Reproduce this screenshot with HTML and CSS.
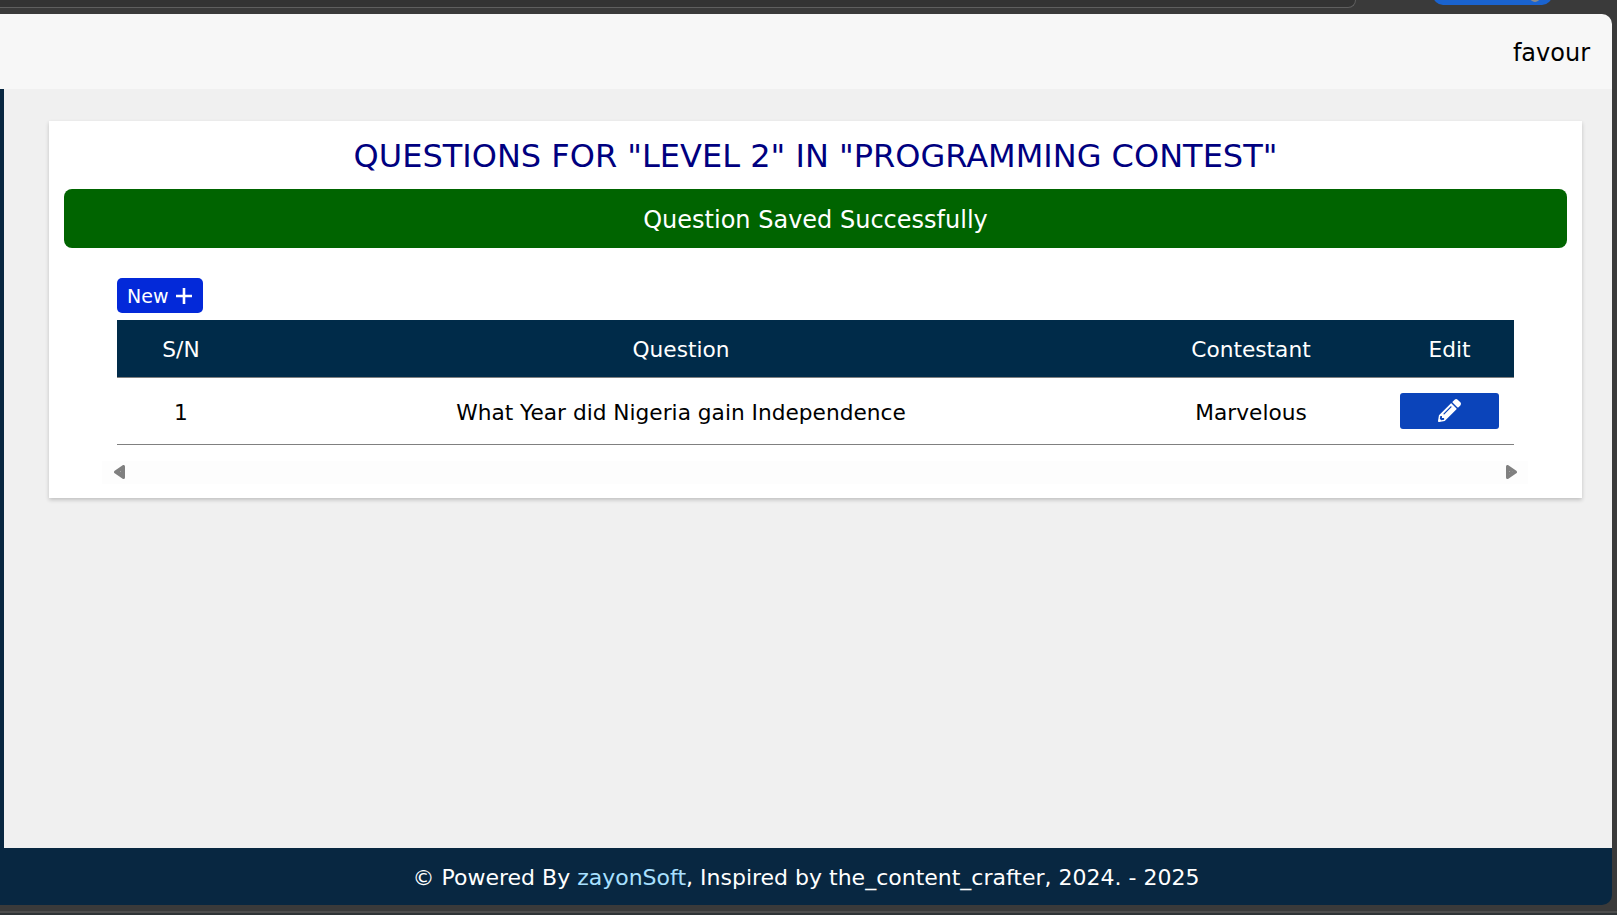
FILE: index.html
```html
<!DOCTYPE html>
<html lang="en">
<head>
    <meta charset="UTF-8">
    <meta name="viewport" content="width=device-width, initial-scale=1.0">
    <title>Questions</title>
    <link rel="stylesheet" href="styles.css">
</head>
<body>
    <div class="chrome">
        <div class="address-bar"></div>
        <div class="profile-pill"><span class="profile-dot"></span></div>
    </div>

    <div class="window">
        <header class="topbar">
            <span class="username">favour</span>
        </header>

        <main class="content">
            <section class="card">
                <h1 class="card-title">QUESTIONS FOR "LEVEL 2" IN "PROGRAMMING CONTEST"</h1>
                <div class="alert">Question Saved Successfully</div>

                <div class="table-wrap">
                    <button class="btn-new">New
                        <svg class="icon-plus" viewBox="0 0 16 16" width="16" height="16">
                            <path d="M8 0v16M0 8h16" stroke="#fff" stroke-width="2.6" fill="none"/>
                        </svg>
                    </button>
                    <table class="questions">
                        <thead>
                            <tr>
                                <th class="col-sn">S/N</th>
                                <th class="col-question">Question</th>
                                <th class="col-contestant">Contestant</th>
                                <th class="col-edit">Edit</th>
                            </tr>
                        </thead>
                        <tbody>
                            <tr>
                                <td>1</td>
                                <td>What Year did Nigeria gain Independence</td>
                                <td>Marvelous</td>
                                <td class="cell-edit">
                                    <button class="btn-edit">
                                        <svg viewBox="0 0 512 512" width="23" height="23">
                                            <path fill="#fff" d="M497.9 142.1l-46.1 46.1c-4.7 4.7-12.3 4.7-17 0l-111-111c-4.7-4.7-4.7-12.3 0-17l46.1-46.1c18.7-18.7 49.1-18.7 67.9 0l60.1 60.1c18.8 18.7 18.8 49.1 0 67.9zM284.2 99.8L21.6 362.4.4 483.9c-2.9 16.4 11.4 30.6 27.8 27.8l121.5-21.3 262.6-262.6c4.7-4.7 4.7-12.3 0-17l-111-111c-4.8-4.7-12.4-4.7-17.1 0zM124.1 339.9c-5.5-5.5-5.5-14.3 0-19.8l154-154c5.5-5.5 14.3-5.5 19.8 0s5.5 14.3 0 19.8l-154 154c-5.5 5.5-14.3 5.5-19.8 0zM88 424h48v36.3l-64.5 11.3-31.1-31.1L51.7 376H88v48z"/>
                                        </svg>
                                    </button>
                                </td>
                            </tr>
                        </tbody>
                    </table>
                    <div class="scrollbar">
                        <svg class="arrow" viewBox="0 0 11 14" width="11" height="14">
                            <defs>
                                <pattern id="arrow-dots" width="3" height="3" patternUnits="userSpaceOnUse">
                                    <rect width="3" height="3" fill="#808080"/>
                                    <rect width="1" height="1" fill="#a6a6a6"/>
                                </pattern>
                            </defs>
                            <path d="M9.5 1.5v11L1.5 7z" fill="url(#arrow-dots)" stroke="#808080" stroke-width="3" stroke-linejoin="round"/>
                        </svg>
                        <svg class="arrow" viewBox="0 0 11 14" width="11" height="14">
                            <path d="M1.5 1.5v11L9.5 7z" fill="url(#arrow-dots)" stroke="#808080" stroke-width="3" stroke-linejoin="round"/>
                        </svg>
                    </div>
                </div>
            </section>
        </main>

        <footer class="footer">
            © Powered By <a href="#">zayonSoft</a>, Inspired by the_content_crafter, 2024. - 2025
        </footer>
    </div>

    <div class="chrome-bottom"></div>
</body>
</html>
```

FILE: styles.css
```css
* {
    box-sizing: border-box;
}
html, body {
    height: 915px;
    overflow: hidden;
}
body {
    margin: 0;
    background: #3a3a3a;
    font-family: "DejaVu Sans", Verdana, sans-serif;
    color: #000;
}

/* browser bits around the page */
.chrome {
    position: relative;
    height: 14px;
    background: #3a3a3a;
    overflow: hidden;
}
.address-bar {
    width: 1356px;
    height: 8px;
    background: #333;
    border-bottom: 1px solid #5f5f5f;
    border-right: 1px solid #5f5f5f;
    border-bottom-right-radius: 12px;
}
.profile-pill {
    position: absolute;
    left: 1433px;
    top: -15px;
    width: 119px;
    height: 20px;
    background: #1a63cf;
    border-radius: 10px;
}
.profile-dot {
    position: absolute;
    right: 12px;
    top: 7px;
    width: 10px;
    height: 10px;
    background: #8a8a8a;
    border-radius: 50%;
}
.chrome-bottom {
    height: 10px;
    background: linear-gradient(#3a3a3a 6px, #4d4d4d 6px, #4d4d4d 8px, #2f3436 8px);
}

.window {
    height: 891px;
    margin-right: 5px;
    display: flex;
    flex-direction: column;
    border-radius: 0 10px 10px 0;
    overflow: hidden;
}
.topbar {
    height: 75px;
    flex-shrink: 0;
    background: #f7f7f7;
    display: flex;
    align-items: center;
    justify-content: flex-end;
    padding: 2px 22px 0 0;
}
.username {
    font-size: 24px;
}

.content {
    flex: 1;
    background: #f0f0f0;
    border-left: 4px solid #082741;
    padding: 32px 30px 0 45px;
}
.card {
    background: #fff;
    height: 377px;
    padding: 1px 15px 0;
    box-shadow: 0 2px 4px rgba(0,0,0,0.2);
}
.card-title {
    margin: 12px 0 0;
    height: 55px;
    font-size: 32px;
    font-weight: normal;
    line-height: 44px;
    color: #000080;
    text-align: center;
}
.alert {
    height: 59px;
    line-height: 63px;
    background: #006400;
    color: #fff;
    font-size: 24px;
    text-align: center;
    border-radius: 8px;
}

.table-wrap {
    padding: 30px 53px 0;
}
.btn-new {
    display: flex;
    align-items: center;
    gap: 8px;
    height: 35px;
    width: 86px;
    padding: 0 10px;
    background: #0329d9;
    color: #fff;
    border: none;
    border-radius: 5px;
    font-family: inherit;
    font-size: 19px;
    margin-bottom: 7px;
}
.questions {
    width: 100%;
    border-collapse: collapse;
    table-layout: fixed;
    font-size: 21.7px;
}
.questions th {
    height: 57px;
    padding-top: 3px;
    background: #002b49;
    color: #fff;
    font-weight: normal;
    text-align: center;
    border-bottom: 1px solid #808080;
}
.questions td {
    height: 67px;
    padding-top: 4px;
    text-align: center;
    border-bottom: 1px solid #808080;
}
.questions .cell-edit {
    padding-top: 1px;
}
.col-sn { width: 128px; }
.col-question { width: 872px; }
.col-contestant { width: 268px; }
.btn-edit {
    display: inline-flex;
    align-items: center;
    justify-content: center;
    width: 99px;
    height: 36px;
    background: #0b44ba;
    border: none;
    border-radius: 3px;
    vertical-align: middle;
}

.scrollbar {
    display: flex;
    justify-content: space-between;
    align-items: center;
    height: 23px;
    margin: 16px -14px 0 -15px;
    padding: 0 11px 1px 12px;
    background: #fdfdfd;
}

.footer {
    height: 57px;
    flex-shrink: 0;
    background: #082741;
    color: #fff;
    font-size: 22px;
    line-height: 59px;
    text-align: center;
}
.footer a {
    color: #a8e0ff;
    text-decoration: none;
}
```
